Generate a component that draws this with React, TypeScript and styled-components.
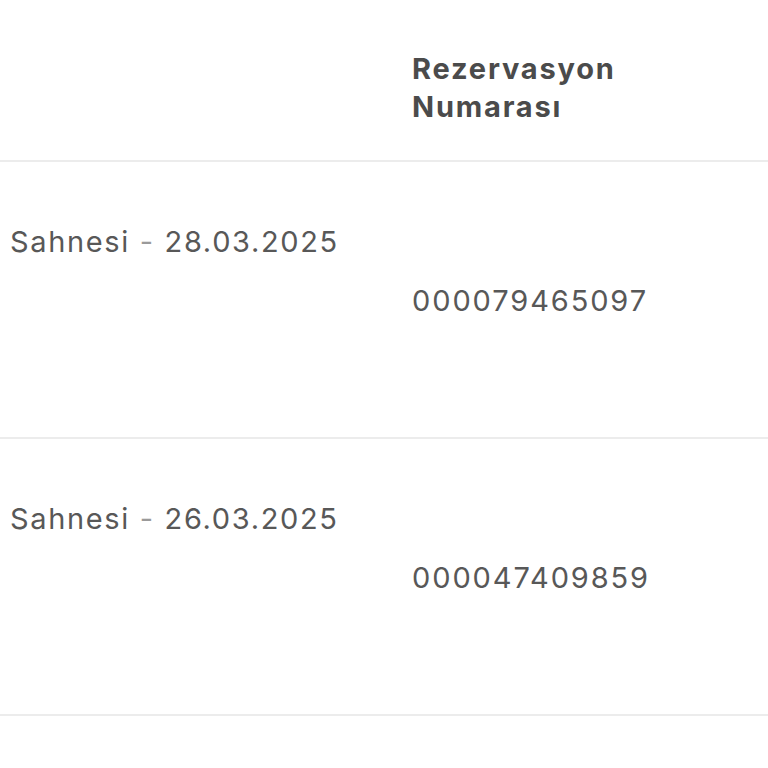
import * as React from 'react'
import styled, { createGlobalStyle } from 'styled-components'

const GlobalStyle = createGlobalStyle`
  html, body {
    margin: 0;
    padding: 0;
    background: #ffffff;
  }
  body {
    font-family: Inter, "Noto Sans", "Liberation Sans", sans-serif;
    -webkit-font-smoothing: antialiased;
  }
`

const TableWrap = styled.div`
  width: 768px;
  height: 768px;
  overflow: hidden;
  background: #ffffff;
`

const Row = styled.div<{ $height: number }>`
  display: grid;
  grid-template-columns: 412px 1fr;
  height: ${p => p.$height}px;
  border-bottom: 2px solid #ececec;
  box-sizing: border-box;
`

const HeadCell = styled.div`
  padding-top: 50px;
  font-size: 29px;
  line-height: 38px;
  font-weight: 700;
  letter-spacing: 1.8px;
  color: #4b4b4b;
`

const EventCell = styled.div`
  padding-top: 62px;
  padding-left: 10px;
  font-size: 29px;
  line-height: 36px;
  letter-spacing: 1.65px;
  color: #585858;
  white-space: nowrap;
`

const Dash = styled.span`
  color: #9a9a9a;
`

const NumberCell = styled.div`
  display: flex;
  align-items: center;
  font-size: 29px;
  letter-spacing: 1.9px;
  color: #585858;
  padding-top: 1px;
`

type Booking = { venue: string, date: string, number: string }

const bookings: Booking[] = [
  { venue: 'Sahnesi', date: '28.03.2025', number: '000079465097' },
  { venue: 'Sahnesi', date: '26.03.2025', number: '000047409859' },
]

export default function App(){
  return (
    <TableWrap>
      <GlobalStyle />

      <Row $height={162}>
        <div />
        <HeadCell>Rezervasyon<br />Numarası</HeadCell>
      </Row>

      {bookings.map((b, i) => (
        <Row key={`booking-${i}`} $height={277}>
          <EventCell>
            {b.venue} <Dash>-</Dash> {b.date}
          </EventCell>
          <NumberCell>{b.number}</NumberCell>
        </Row>
      ))}
    </TableWrap>
  )
}
